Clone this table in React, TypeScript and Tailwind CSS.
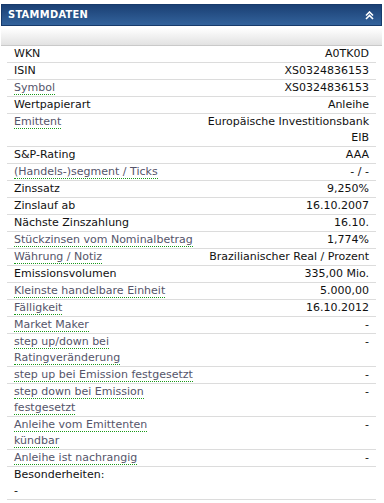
import React from "react";

type Row = {
  label: string[];
  value?: string[];
  link?: boolean;
};

const rows: Row[] = [
  { label: ["WKN"], value: ["A0TK0D"] },
  { label: ["ISIN"], value: ["XS0324836153"] },
  { label: ["Symbol"], value: ["XS0324836153"], link: true },
  { label: ["Wertpapierart"], value: ["Anleihe"] },
  { label: ["Emittent"], value: ["Europäische Investitionsbank", "EIB"], link: true },
  { label: ["S&P-Rating"], value: ["AAA"] },
  { label: ["(Handels-)segment / Ticks"], value: ["- / -"], link: true },
  { label: ["Zinssatz"], value: ["9,250%"] },
  { label: ["Zinslauf ab"], value: ["16.10.2007"] },
  { label: ["Nächste Zinszahlung"], value: ["16.10."] },
  { label: ["Stückzinsen vom Nominalbetrag"], value: ["1,774%"], link: true },
  { label: ["Währung / Notiz"], value: ["Brazilianischer Real / Prozent"], link: true },
  { label: ["Emissionsvolumen"], value: ["335,00 Mio."] },
  { label: ["Kleinste handelbare Einheit"], value: ["5.000,00"], link: true },
  { label: ["Fälligkeit"], value: ["16.10.2012"], link: true },
  { label: ["Market Maker"], value: ["-"], link: true },
  { label: ["step up/down bei", "Ratingveränderung"], value: ["-"], link: true },
  { label: ["step up bei Emission festgesetzt"], value: ["-"], link: true },
  { label: ["step down bei Emission", "festgesetzt"], value: ["-"], link: true },
  { label: ["Anleihe vom Emittenten", "kündbar"], value: ["-"], link: true },
  { label: ["Anleihe ist nachrangig"], value: ["-"], link: true },
  { label: ["Besonderheiten:", "-"] },
];

const DataRow = ({ row }: { row: Row }) => {
  return (
    <div className="flex justify-between border-b border-[#dcdcdc] px-[7px] text-[11px] leading-[16px] font-['DejaVu_Sans',sans-serif]">
      <div className="whitespace-nowrap">
        {row.label.map((l, i) => (
          <div key={i}>
            {row.link ? (
              <span className="text-[#55556a] border-b border-dotted border-[#1a9a1a]">{l}</span>
            ) : (
              <span className="text-[#111]">{l}</span>
            )}
          </div>
        ))}
      </div>
      <div className="whitespace-nowrap text-right text-[#111]">
        {row.value?.map((v, i) => (
          <div key={i}>{v}</div>
        ))}
      </div>
    </div>
  );
};

export default function App() {
  return (
    <div className="w-[381px] ml-[1px] pt-[4px] bg-white">
      {/* header */}
      <div className="flex items-center justify-between h-[22px] border border-[#173a6b] bg-gradient-to-b from-[#1b4074] to-[#33639c] px-[6px]">
        <span className="text-white text-[11px] font-bold tracking-[0.3px] font-['DejaVu_Sans_Condensed','DejaVu_Sans',sans-serif]">
          STAMMDATEN
        </span>
        <svg width="9" height="9" viewBox="0 0 9 9" className="mr-[1px]">
          <path d="M1 4.5 L4.5 1 L8 4.5 M1 8 L4.5 4.5 L8 8" stroke="white" strokeWidth="1.6" fill="none" />
        </svg>
      </div>
      <div className="mt-[2px] h-[18px] bg-gradient-to-b from-white to-[#e2e2e2] border-b border-[#c9c9c9]" />
      <div className="px-[6px]">
        {rows.map((r, i) => (
          <DataRow key={i} row={r} />
        ))}
      </div>
    </div>
  );
}
